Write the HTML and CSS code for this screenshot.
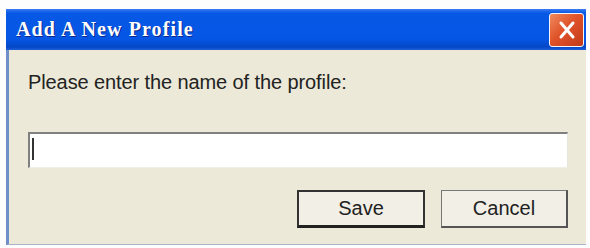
FILE: index.html
```html
<!DOCTYPE html>
<html>
<head>
<meta charset="utf-8">
<link rel="stylesheet" href="styles.css">
</head>
<body>
<div class="dialog">
  <div class="titlebar">
    <span class="title">Add A New Profile</span>
    <div class="close">
      <svg width="22" height="20" viewBox="0 0 22 20"><path d="M5 3 L17 17 M17 3 L5 17" stroke="#fff" stroke-width="3" stroke-linecap="round"/></svg>
    </div>
  </div>
  <div class="content">
    <div class="label">Please enter the name of the profile:</div>
    <div class="input"><span class="caret"></span></div>
    <div class="buttons">
      <div class="btn default">Save</div>
      <div class="btn">Cancel</div>
    </div>
  </div>
</div>
</body>
</html>
```
FILE: styles.css
```css
html, body {
  margin: 0;
  padding: 0;
  background: #fdfdfd;
}
.dialog {
  margin: 9px 4px 0 6px;
  width: 580px;
  display: flex;
  flex-direction: column;
}
.titlebar {
  height: 41px;
  box-sizing: border-box;
  background: linear-gradient(to bottom, #3a7cf2 0px, #0858e6 4px, #0556e4 30px, #0447c8 38px, #1f5fd6 41px);
  display: flex;
  align-items: center;
  justify-content: space-between;
  padding: 0 2px 0 10px;
}
.title {
  font-family: "Liberation Serif", serif;
  font-weight: bold;
  font-size: 20px;
  color: #fff;
  letter-spacing: 1.1px;
  text-shadow: 1px 1px 0 #0a2a90;
}
.close {
  width: 35px;
  height: 34px;
  box-sizing: border-box;
  border: 1.5px solid #f4f4f4;
  border-radius: 3px;
  background: linear-gradient(135deg, #f08a5e 0%, #e0532a 45%, #c23a18 100%);
  display: flex;
  align-items: center;
  justify-content: center;
}
.content {
  background: #ece9d8;
  height: 195px;
  border-left: 3px solid #6f8fc8;
  border-bottom: 1px solid #a9b4cc;
  box-sizing: border-box;
  padding: 21px 18px 0 19px;
  display: flex;
  flex-direction: column;
}
.label {
  font-family: "Liberation Sans", sans-serif;
  font-size: 20px;
  color: #222;
  letter-spacing: -0.1px;
  height: 22px;
  line-height: 22px;
}
.input {
  margin-top: 39px;
  height: 36px;
  box-sizing: border-box;
  background: #fff;
  border-top: 2px solid #808080;
  border-left: 2px solid #808080;
  border-right: 1px solid #e8e6dc;
  border-bottom: 1px solid #f2f0e6;
  padding: 4px 0 0 2px;
}
.caret {
  display: block;
  width: 2px;
  height: 22px;
  background: #333;
}
.buttons {
  margin-top: 22px;
  display: flex;
  justify-content: flex-end;
  gap: 16px;
}
.btn {
  width: 127px;
  height: 38px;
  box-sizing: border-box;
  border: 1px solid #777;
  border-bottom: 2px solid #555;
  border-right: 2px solid #555;
  background: #f1efe6;
  font-family: "Liberation Sans", sans-serif;
  font-size: 20px;
  color: #222;
  display: flex;
  align-items: center;
  justify-content: center;
}
.btn.default {
  width: 128px;
  border: 2px solid #333;
  border-bottom: 3px solid #222;
}
```
